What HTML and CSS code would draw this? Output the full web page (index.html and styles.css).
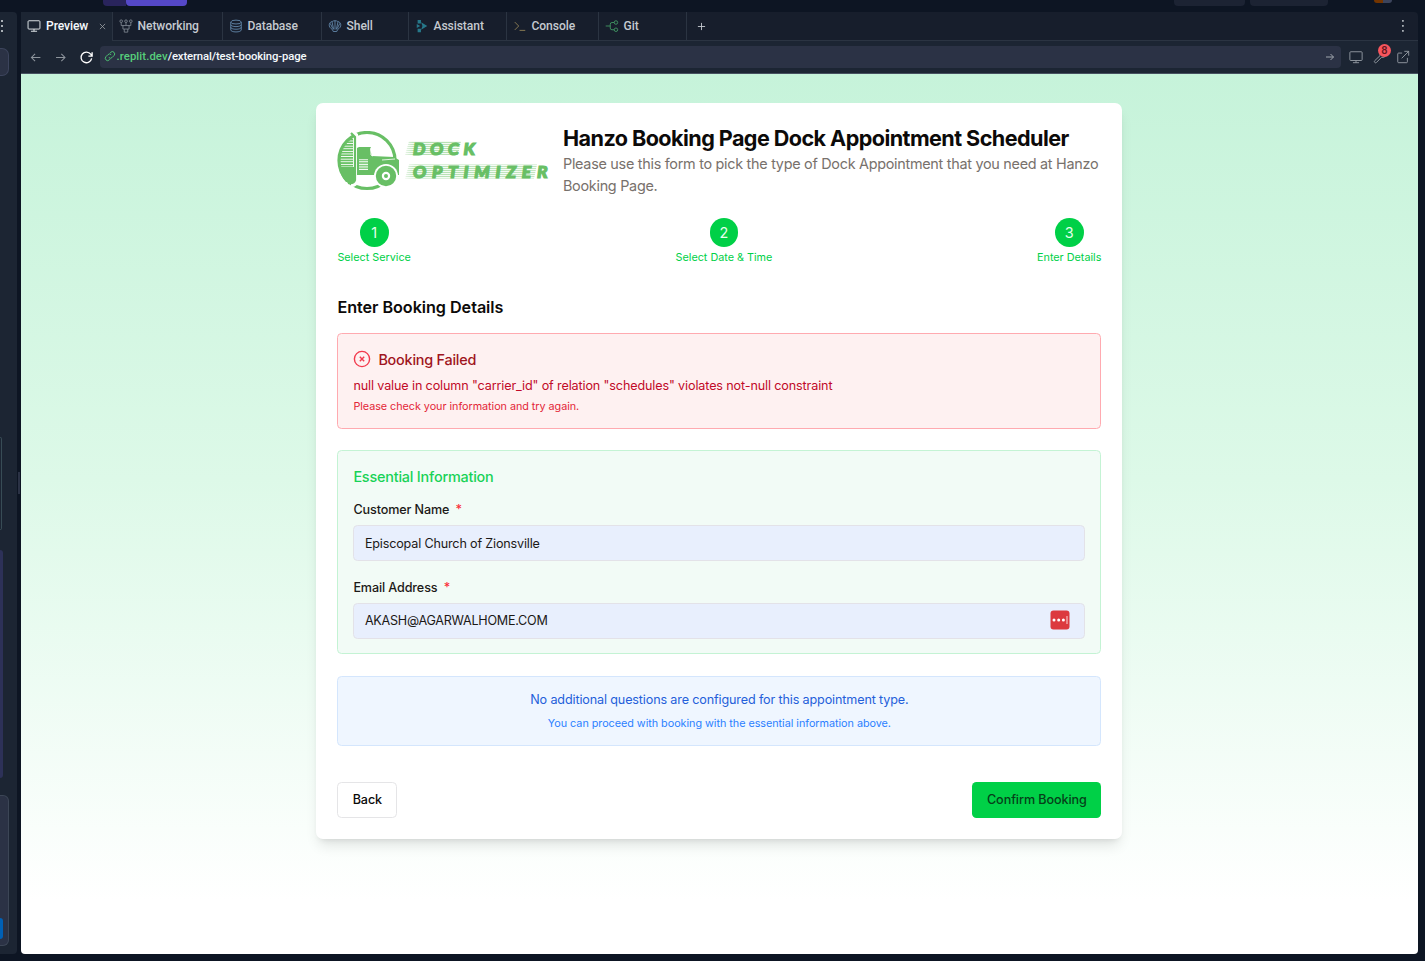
FILE: index.html
```html
<!DOCTYPE html>
<html lang="en">
<head>
<meta charset="utf-8">
<title>Preview</title>
<link rel="stylesheet" href="styles.css">
</head>
<body>
<div class="ide">
  <div class="topstrip">
    <span class="chip chip-dark"></span><span class="chip chip-violet"></span>
    <span class="chip chip-a"></span><span class="chip chip-b"></span>
    <span class="avatar"></span>
  </div>
  <div class="workspace">
    <aside class="side">
      <svg class="side-dots" viewBox="0 0 4 14"><path d="M1 1h2v2H1zM1 6h2v2H1zM1 11h2v2H1z"/></svg>
      <span class="side-search"></span>
      <span class="side-frame"></span>
      <span class="side-purple"></span>
      <span class="side-input"><i></i></span>
    </aside>
    <div class="gutter"><span></span></div>
    <main class="pane">
      <nav class="tabs">
        <div class="tab tab-preview active"><svg viewBox="0 0 16 16"><rect x="1.2" y="2" width="13.6" height="9.5" rx="1"/><path d="M4.500 14h7M8 11.500V14"/></svg><span>Preview</span><svg class="close" viewBox="0 0 8 8"><path d="M1 1l6 6M7 1L1 7"/></svg></div>
        <div class="tab tab-net"><svg class="i-grey" viewBox="0 0 16 16"><circle cx="2.5" cy="2.5" r="1.5"/><circle cx="8" cy="2.5" r="1.5"/><circle cx="13.5" cy="2.5" r="1.5"/><path d="M2.500 4v3.500H5M8 4v3.500M13.500 4v3.500H11M4.500 7.500h7v4h-7zM6 11.500v3.500h4v-3.500"/></svg><span>Networking</span></div>
        <div class="tab tab-db"><svg class="i-blue" viewBox="0 0 16 16"><ellipse cx="8" cy="3.500" rx="6" ry="2.200"/><path d="M2 3.500v9c0 1.200 2.500 2.300 6 2.300s6-1.100 6-2.300v-9M2 6.500c0 1.200 2.500 2.200 6 2.200s6-1 6-2.200M2 9.500c0 1.200 2.500 2.200 6 2.200s6-1 6-2.200"/></svg><span>Database</span></div>
        <div class="tab tab-shell"><svg class="i-blue" viewBox="0 0 16 16"><path d="M5 12C2.500 10.500 1 8.500 1.500 6 2 4 3.500 3 5 2.800 6 1.700 10 1.700 11 2.800c1.500.2 3 1.200 3.500 3.200.5 2.500-1 4.500-3.500 6l-1 2.300H6zM8 12V2M6.500 12L4.500 3M9.500 12l2-9M5.500 11L2.500 5M10.500 11l3-6"/></svg><span>Shell</span></div>
        <div class="tab tab-as"><svg class="i-teal" viewBox="0 0 16 16"><path d="M3 1h3.800v4.200H3zM2 5.800l4 2.200-4 2.200zM3 11h3.800v4.200H3zM7 3.800L14 8l-7 4.200L8.500 8z"/></svg><span>Assistant</span></div>
        <div class="tab tab-con"><svg class="i-gold" viewBox="0 0 16 16"><path d="M2 3.500L6.500 8 2 12.500M7.500 13h6.500"/></svg><span>Console</span></div>
        <div class="tab tab-git"><svg class="i-green" viewBox="0 0 16 16"><circle cx="12.500" cy="4" r="2"/><circle cx="12.500" cy="12.300" r="2"/><path d="M.8 8H6M10.500 4H8Q6 4 6 6v4.300q0 2 2 2h2.500"/></svg><span>Git</span></div>
        <div class="tab-plus"><svg viewBox="0 0 10 10"><path d="M5 1v8M1 5h8"/></svg></div>
        <svg class="more" viewBox="0 0 4 14"><path d="M1 1h1.800v1.800H1zM1 6h1.800v1.800H1zM1 11h1.800v1.800H1z"/></svg>
      </nav>
      <div class="addressbar">
        <svg class="nav dim" viewBox="0 0 16 16"><path d="M14 8H3M7.500 3.500L3 8l4.500 4.500"/></svg>
        <svg class="nav dim" viewBox="0 0 16 16"><path d="M2.500 8h11M9 3.500L13.500 8 9 12.500"/></svg>
        <svg class="nav reload" viewBox="0 0 16 16"><path d="M13.500 9A5.700 5.700 0 1 1 12.500 4.500L14 6.500M14 2.500v4h-4"/></svg>
        <div class="url"><svg viewBox="0 0 12 12"><path d="M4.800 7.500a2.300 2.300 0 0 0 3.300 0l1.900-1.900a2.300 2.300 0 0 0-3.300-3.300l-.8.8M7.200 4.700a2.300 2.300 0 0 0-3.300 0L2 6.600a2.300 2.300 0 0 0 3.300 3.300l.8-.8"/></svg><span class="host">.replit.dev</span><span class="path">/external/test-booking-page</span><svg class="go" viewBox="0 0 12 12"><path d="M2 6h7.500M6.500 3l3 3-3 3"/></svg></div>
        <svg class="tool t1" viewBox="0 0 16 16"><rect x="1" y="2" width="14" height="10" rx="1"/><path d="M4.500 14.500h7M8 12v2.500"/></svg>
        <div class="wrench"><svg class="tool" viewBox="0 0 16 16"><path d="M9 3.500a3.500 3.500 0 0 1 4.500-1L11 5v1h1l2.500-2a3.500 3.500 0 0 1-4.700 4.300L4 14.200a1.300 1.300 0 0 1-2-2L8 6.500a3.500 3.500 0 0 1 1-3z"/></svg><b>8</b></div>
        <svg class="tool" viewBox="0 0 16 16"><path d="M7 3.500H3q-1 0-1 1v9q0 1 1 1h9q1 0 1-1V9M9.500 1.500h5v5M14.500 1.500L6.500 9.500"/></svg>
      </div>
      <section class="page">
        <div class="card">
          <header class="head">
            <svg class="logo" viewBox="0 0 212 60">
              <defs>
                <pattern id="speed" width="8" height="2.600" patternUnits="userSpaceOnUse"><rect width="8" height="1.700" fill="#68c163"/></pattern>
                <linearGradient id="trail" x1="0" x2="1"><stop offset="0" stop-color="#68c163" stop-opacity=".15"/><stop offset=".08" stop-color="#68c163" stop-opacity=".5"/><stop offset="1" stop-color="#68c163" stop-opacity=".4"/></linearGradient>
                <pattern id="lines" width="8" height="2" patternUnits="userSpaceOnUse"><rect width="8" height="1" fill="#fff" fill-opacity=".85"/></pattern>
              </defs>
              <circle cx="30" cy="29.500" r="28" fill="none" stroke="#68bf65" stroke-width="3.200"/>
              <path d="M3 20L8 11l8-6v46L7 48 2 38z" fill="url(#speed)"/>
              <path d="M2 36h15v15H9Q4 46 2 36z" fill="#68bf65"/>
              <path d="M14 0l5 4v46q0 4-5 4" fill="none" stroke="#fff" stroke-width="4"/>
              <path d="M14 2l4 4v43q-1 4-7 3" fill="none" stroke="#68bf65" stroke-width="2.200"/>
              <path d="M20 44V17l2-1h12l-1 2 2 7 22 1 5 3v15h-4q-12-8-18 0z" fill="#68bf65"/>
              <path d="M22 28h9v11h-9z" fill="#fff"/><path d="M22 28h9v11h-9z" fill="url(#speed)" opacity=".8"/>
              <path d="M34 19v5l2 1" stroke="#fff"/><path d="M45 29l13-1" stroke="#fff" stroke-width=".8"/>
              <circle cx="49" cy="45" r="12" fill="#fff"/><circle cx="49" cy="45" r="7.200" fill="none" stroke="#68bf65" stroke-width="6"/><circle cx="49" cy="45" r="2" fill="#68bf65"/>
              <path d="M72 10h52l-3 14H68zM72 33.500h128l-3 14H68z" fill="url(#trail)"/><path d="M66 9h70v16H66zM66 33h142v16H66z" fill="url(#lines)"/>
              <g class="logotext"><text x="76" y="23.500" textLength="62">DOCK</text><text x="76" y="47.200" textLength="134.500">OPTIMIZER</text></g>
            </svg>
            <div><h1>Hanzo Booking Page Dock Appointment Scheduler</h1><p>Please use this form to pick the type of Dock Appointment that you need at Hanzo Booking Page.</p></div>
          </header>
          <ol class="steps">
            <li><b>1</b><span>Select Service</span></li>
            <li><b>2</b><span>Select Date &amp; Time</span></li>
            <li><b>3</b><span>Enter Details</span></li>
          </ol>
          <h2>Enter Booking Details</h2>
          <div class="alert">
            <div class="alert-title"><svg viewBox="0 0 18 18"><circle cx="9" cy="9" r="7.600"/><path d="M6.800 6.800l4.400 4.400M11.200 6.800l-4.400 4.400"/></svg><h3>Booking Failed</h3></div>
            <p class="alert-text">null value in column "carrier_id" of relation "schedules" violates not-null constraint</p>
            <p class="alert-hint">Please check your information and try again.</p>
          </div>
          <div class="essential">
            <h3>Essential Information</h3>
            <label>Customer Name <em>*</em></label>
            <div class="field">Episcopal Church of Zionsville</div>
            <label>Email Address <em>*</em></label>
            <div class="field email">AKASH@AGARWALHOME.COM<svg viewBox="0 0 20 20"><rect x=".5" y=".5" width="19" height="19" rx="3" fill="#dc3a3f"/><circle cx="4" cy="10" r="1.500" fill="#fff"/><circle cx="8.700" cy="10" r="1.500" fill="#fff"/><circle cx="13.400" cy="10" r="1.500" fill="#fff"/><path d="M17 6v8" stroke="#f3a9ab" stroke-width="1.400"/></svg></div>
          </div>
          <div class="notice"><p class="n1">No additional questions are configured for this appointment type.</p><p class="n2">You can proceed with booking with the essential information above.</p></div>
          <footer><button class="back">Back</button><button class="confirm">Confirm Booking</button></footer>
        </div>
      </section>
    </main>
  </div>
</div>
</body>
</html>
```
FILE: styles.css
```css
*{box-sizing:border-box}
body,h1,h2,h3,p,ol{margin:0;padding:0}
body{background:#0e1525;font-family:Inter,sans-serif;overflow:hidden}
svg{fill:none;stroke:currentColor;flex:none;display:block}
.ide{height:961px;width:1425px;display:flex;flex-direction:column;background:#0d1523}
.topstrip{height:12px;display:flex;align-items:flex-start;padding-left:103px}
.chip{height:6px;border-radius:0 0 4px 4px;background:#1c2333}
.chip-dark{width:23px;background:#29245c;border-radius:0 0 0 4px}
.chip-violet{width:61px;background:#5548c8}
.chip-a{width:71px;margin-left:987px}
.chip-b{width:78px;margin-left:5px}
.avatar{width:18px;height:3px;margin-left:46px;border-radius:0 0 9px 9px;background:linear-gradient(90deg,#743500 50%,#3c445c 50%)}
.workspace{display:flex;height:942px}
.side{width:17px;background:#1c2533;border-radius:0 4px 4px 0;display:flex;flex-direction:column;align-items:flex-start;overflow:hidden}
.side-dots,.more{width:4px;height:14px;fill:#aab0b6;stroke:none}
.side-dots{margin-top:7px}
.side-search{width:9px;height:28px;margin-top:15px;background:#2b3245;border:1px solid #3c445c;border-left:0;border-radius:0 7px 7px 0}
.side-frame{width:2px;height:93px;margin-top:361px;border:1px solid #384c56;border-left:0;border-radius:0 4px 4px 0}
.side-purple{width:3px;height:228px;margin-top:20px;background:#2d3158;border-radius:0 4px 4px 0}
.side-input{width:9px;height:151px;margin-top:17px;background:#2b3245;border:1px solid #3c4656;border-left:0;border-radius:0 6px 6px 0;display:flex;align-items:flex-end;padding-bottom:6px}
.side-input i{width:3px;height:21px;background:#0060b5;border-radius:0 3px 3px 0}
.gutter{width:4px;padding:460px 0 0 1px}
.gutter span{display:block;width:2px;height:22px;background:#2b3245}
.pane{width:1397px;display:flex;flex-direction:column}
.tabs{height:29px;display:flex;background:#171e2c;border-bottom:1px solid #2b3442;border-radius:4px 4px 0 0;color:#c5cad0;font:500 12.1px Roboto,sans-serif;letter-spacing:-.08px}
.tab{display:flex;align-items:center;gap:5px;border-right:1px solid #2b3442;padding-left:5.500px}
.tab svg{width:14px;height:14px}
.tab-preview{width:92px;background:#1c2533;color:#f5f9fc;height:29px;padding-bottom:1px;padding-left:6px}
.tab .close{width:7px;height:7px;margin-left:6px;color:#9da2a6;stroke-width:.9}
.tab-net{width:110px}.tab-db{width:99px}.tab-shell{width:87px}.tab-as{width:98px}.tab-con{width:92px}.tab-git{width:88px}
.i-grey{color:#7d858f}.i-blue{color:#6489ad}.i-gold{color:#928257}.i-green{color:#429b65}
.tab .i-teal{fill:#26788a;stroke:none}
.tab-plus{display:flex;align-items:center;padding-left:10px}
.tab-plus svg{width:9px;height:9px}
.more{margin:7px 13px 0 auto}
.addressbar{height:33px;display:flex;align-items:center;background:#1c2533;border-bottom:1px solid #465060;padding:0 8px}
.nav{width:13px;height:13px;margin-right:12px;stroke-width:1.300}
.dim{color:#8d949c}
.reload{width:15px;height:15px;color:#fff;margin-right:6px;stroke-width:1.400}
.url{width:1241px;height:22px;background:#2b3245;border-radius:4px;display:flex;align-items:center;padding:0 5px 2px 4px;font:500 11.300px Roboto,sans-serif}
.url svg{width:12px;height:12px;color:#4cbf72}
.host{color:#57ce7b;letter-spacing:.1px;margin-left:.5px}.path{color:#f5f9fc;letter-spacing:-.13px}
.url .go{margin-left:auto;color:#a0a6ae;position:relative;top:1px}
.tool{width:14px;height:14px;color:#9aa1a9}
.t1{margin-left:8px}
.wrench{margin:0 9px 0 10px;position:relative}
.wrench b{position:absolute;left:5px;top:-6px;width:13px;height:13px;border-radius:50%;background:#f8555d;color:#64151d;font:500 11px/14px Roboto,sans-serif;text-align:center}
.page{height:880px;padding:29px 0 0 295.400px;background:linear-gradient(#c6f3da 0,#ddf9e8 46%,#fff 94%);border-radius:0 0 4px 4px}
.card{width:806px;height:736px;background:#fff;border-radius:7px;padding:21.600px 21px;box-shadow:0 9px 14px -3px #0000001c,0 4px 6px -4px #0000001c}
.head{display:flex;align-items:center;gap:13.600px}
.logo{width:212px;height:60px;stroke:none}
.logotext{fill:#68bf65;stroke:#68bf65;stroke-width:1.200;font:italic 900 17.500px Lato,sans-serif}
h1{font-size:21.600px;line-height:28.800px;font-weight:700;letter-spacing:-.57px;color:#0c0a09;white-space:nowrap;margin-top:-1px;padding-bottom:1px;height:29.800px}
.head p{font-size:14.400px;line-height:21.600px;color:#78716c;width:540px;letter-spacing:-.28px}
.steps{list-style:none;display:flex;justify-content:space-between;margin-top:21.600px;height:47px}
.steps li{display:flex;flex-direction:column;align-items:center;color:#00d047;font-size:10.800px;line-height:14.400px;gap:3.600px}
.steps b{width:28.800px;height:28.800px;border-radius:50%;background:#00d047;color:#e5ffed;font-size:14.400px;font-weight:400;line-height:29px;text-align:center}
h2{font-size:16.200px;line-height:25px;font-weight:600;margin-top:29.500px;color:#0c0a09;letter-spacing:-.05px}
.alert{height:96px;margin-top:13.500px;border:1px solid #ffaab0;border-radius:4.500px;background:#fef1f1;padding:14.500px 15px;color:#c10a28}
.alert-title{display:flex;align-items:center;gap:7px;height:22px}
.alert-title svg{width:18px;height:18px;color:#f23a4d;stroke-width:1.400;margin-top:-2px}
.alert h3{font-size:14.400px;font-weight:500;color:#9f1420;letter-spacing:-.22px}
.alert-text{font-size:12.600px;line-height:18px;margin-top:6px;letter-spacing:-.13px}
.alert-hint{font-size:10.800px;line-height:15px;margin-top:4px;color:#e32637;letter-spacing:-.04px}
.essential{height:204px;margin-top:21px;border:1px solid #c4f3d4;border-radius:4.500px;background:#f2fbf6;padding:15px}
.essential h3{font-size:14.400px;line-height:22px;font-weight:500;color:#18d257;margin-bottom:13px;letter-spacing:-.2px}
label{display:block;font-size:12.600px;line-height:18px;font-weight:500;color:#1c1917;letter-spacing:-.12px}
em{color:#fb2c36;font-style:normal;margin-left:3px}
.field{height:36px;margin:6px 0 17.500px;border:1px solid #e3e2e8;border-radius:4.500px;background:#e8effd;padding:0 14px 0 10.500px;display:flex;align-items:center;justify-content:space-between;font-size:12.600px;color:#1c1917;letter-spacing:-.17px}
.email{margin-bottom:0;letter-spacing:-.25px;padding-bottom:1px}
.field svg{width:20px;height:20px;stroke:none}
.notice{height:70px;margin-top:22px;border:1px solid #d4e6fd;border-radius:4.500px;background:#eff6ff;text-align:center;padding-top:14px}
.n1{font-size:12.600px;line-height:18px;color:#245fda;letter-spacing:-.14px}
.n2{font-size:10.800px;line-height:15px;margin-top:7px;color:#2b7fff;letter-spacing:-.03px}
footer{display:flex;justify-content:space-between;margin-top:36px}
button{height:36px;border-radius:4.500px;font:500 12.600px Inter,sans-serif;padding:0 0 2px;letter-spacing:-.08px}
.back{width:60px;border:1px solid #e5e5e7;background:#fff;color:#0c0a09}
.confirm{width:129px;border:0;background:#00d047;color:#063f19}
```
